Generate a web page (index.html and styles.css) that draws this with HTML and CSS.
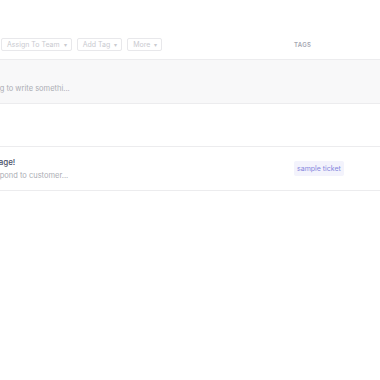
FILE: index.html
```html
<!DOCTYPE html>
<html>
<head>
<meta charset="utf-8">
<link rel="stylesheet" href="styles.css">
</head>
<body>
<div class="page">
  <div class="header">
    <div class="toolbar">
      <span class="btn">Assign To Team <span class="caret">▾</span></span>
      <span class="btn">Add Tag <span class="caret">▾</span></span>
      <span class="btn">More <span class="caret">▾</span></span>
    </div>
    <div class="col-tags head-label">TAGS</div>
  </div>
  <div class="row row-muted">
    <div class="main">
      <div class="title"></div>
      <div class="sub">Start typing to write somethi...</div>
    </div>
    <div class="col-tags"></div>
  </div>
  <div class="row">
    <div class="main">
      <div class="title"></div>
      <div class="sub"></div>
    </div>
    <div class="col-tags"></div>
  </div>
  <div class="row">
    <div class="main">
      <div class="title">Sample page!</div>
      <div class="sub">Please respond to customer...</div>
    </div>
    <div class="col-tags"><span class="tag">sample ticket</span></div>
  </div>
</div>
</body>
</html>
```
FILE: styles.css
```css
html, body {
  margin: 0;
  padding: 0;
  background: #ffffff;
}
body {
  font-family: Inter, "Noto Sans", sans-serif;
  width: 380px;
  height: 380px;
  overflow: hidden;
}
.page {
  width: 500px;
  margin-left: -60px;
}
.header {
  display: flex;
  align-items: center;
  height: 59px;
  border-bottom: 1px solid #ececee;
}
.toolbar {
  flex: 0 0 354px;
  display: flex;
  gap: 5px;
  padding-left: 61px;
  padding-top: 30px;
  box-sizing: border-box;
}
.btn {
  display: inline-flex;
  align-items: center;
  height: 13px;
  padding: 0 4px 0 5px;
  border: 1px solid #e8e8eb;
  border-radius: 2px;
  font-size: 7px;
  color: #c9cacf;
  box-sizing: border-box;
  white-space: nowrap;
}
.caret {
  font-size: 6px;
  margin-left: 4px;
}
.col-tags {
  flex: 1;
  display: flex;
  align-items: center;
}
.head-label {
  padding-top: 30px;
  font-size: 6px;
  font-weight: 600;
  letter-spacing: 0.3px;
  color: #a3a6b0;
}
.row {
  display: flex;
  border-bottom: 1px solid #ececee;
}
.row-muted {
  background: #f8f8f9;
}
.main {
  flex: 0 0 354px;
  padding: 7.5px 0 7px 23px;
  box-sizing: border-box;
}
.title {
  height: 14px;
  line-height: 14px;
  font-size: 8px;
  font-weight: 500;
  color: #4a5068;
  white-space: nowrap;
}
.sub {
  height: 14px;
  line-height: 14px;
  font-size: 7.5px;
  color: #abadb4;
  white-space: nowrap;
}
.tag {
  display: inline-block;
  padding: 3px 3px;
  background: #f3f3fc;
  border-radius: 2px;
  font-size: 7px;
  color: #8587dc;
  line-height: 9px;
}
```
